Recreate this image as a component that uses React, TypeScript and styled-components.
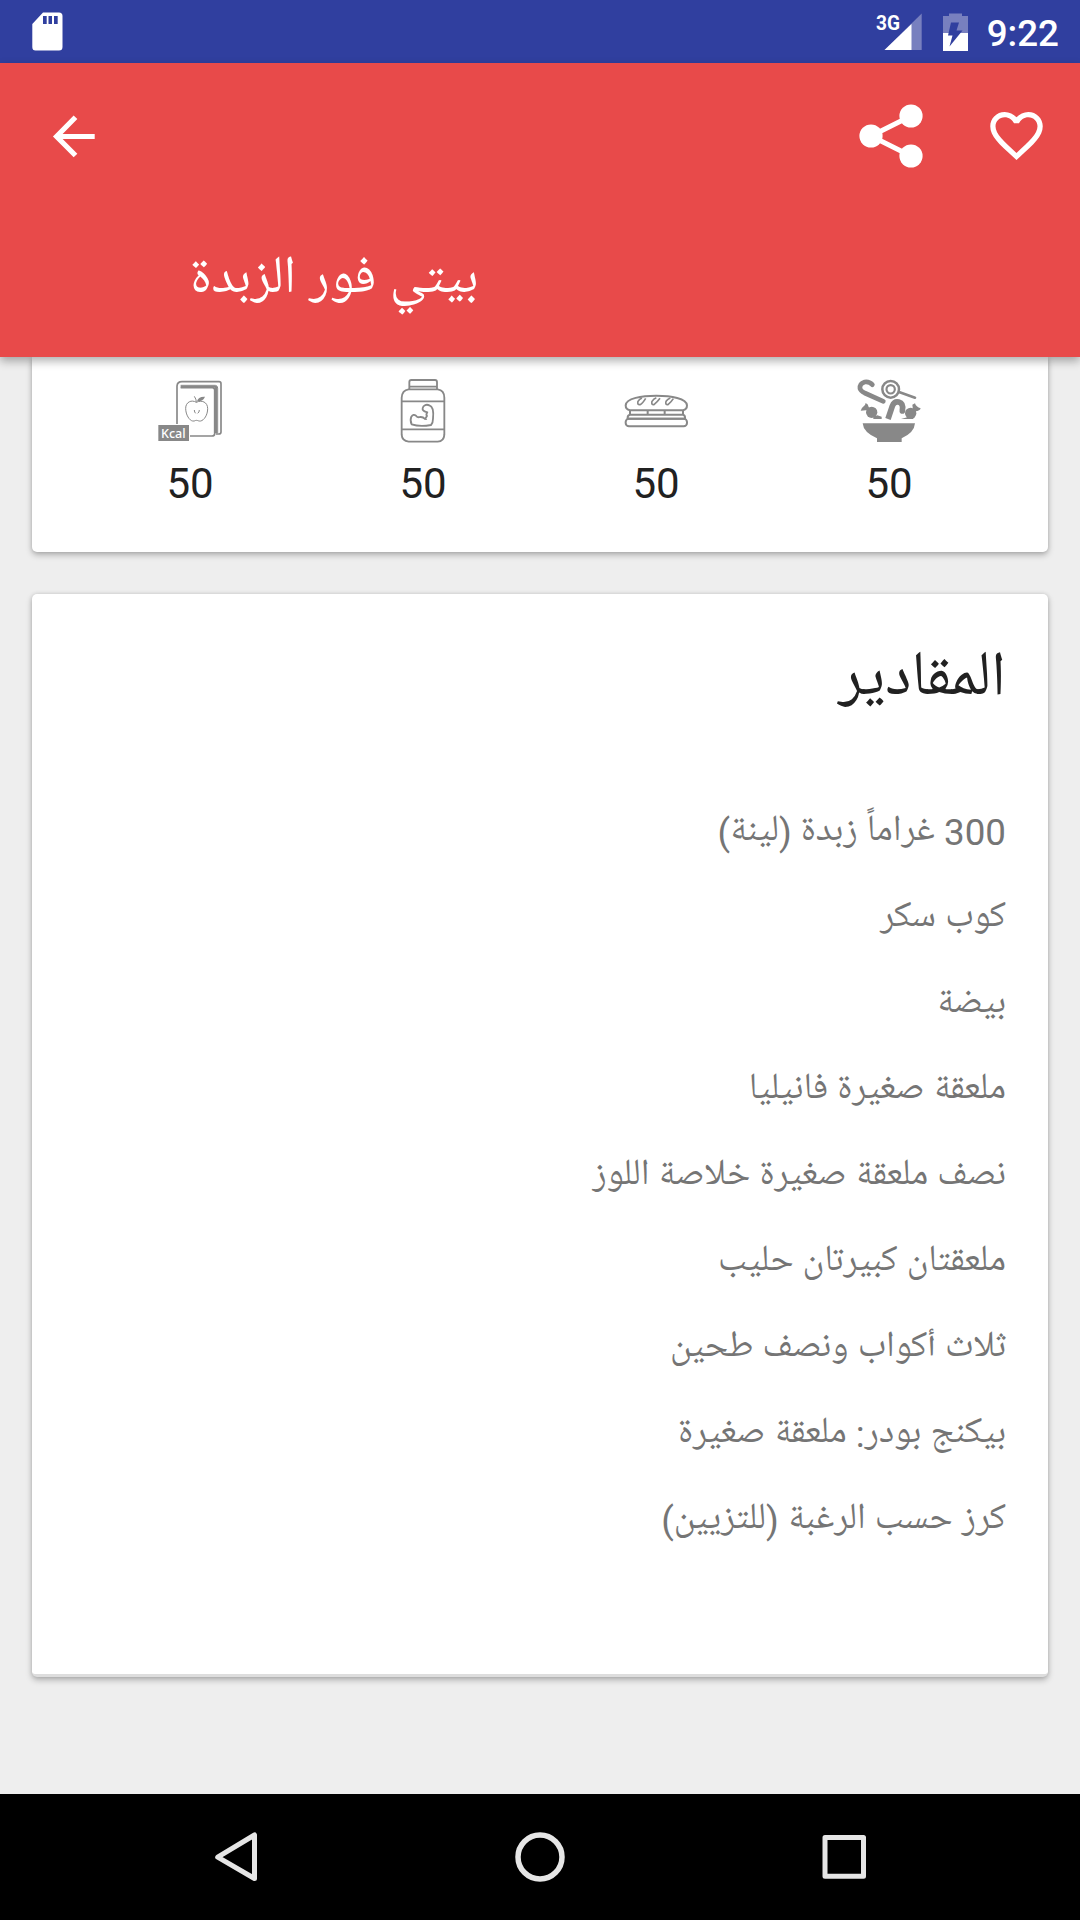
import React from "react";
import styled, { createGlobalStyle } from "styled-components";

const Global = createGlobalStyle`
  body { margin: 0; background: #eee; }
  * { box-sizing: border-box; }
`;
const arabic = `Roboto, "Noto Naskh Arabic UI", "Noto Naskh Arabic", "Noto Sans Arabic", "DejaVu Sans", sans-serif`;

const Screen = styled.div`
  width: 1080px;
  height: 1920px;
  display: flex;
  flex-direction: column;
  background: #eee;
  font-family: ${arabic};
  overflow: hidden;
`;
const StatusBar = styled.div`
  height: 63px;
  flex: none;
  background: #303f9f;
  display: flex;
  align-items: center;
  justify-content: space-between;
  padding: 0 21px 0 32px;
  color: #fff;
`;
const StatusGroup = styled.div`
  display: flex;
  align-items: center;
`;
const Clock = styled.span`
  font: 500 36.75px/63px Roboto, sans-serif;
  margin-left: 18px;
  padding-top: 3px;
`;
const AppBar = styled.header`
  height: 294px;
  flex: none;
  background: #e84a4a;
  color: #fff;
  display: flex;
  flex-direction: column;
  position: relative;
  z-index: 1;
  box-shadow: 0 4px 9px rgba(0, 0, 0, 0.32);
`;
const Toolbar = styled.div`
  height: 147px;
  display: flex;
  align-items: center;
  padding: 0 32px 0 42px;
`;
const Actions = styled.div`
  margin-left: auto;
  display: flex;
  align-items: center;
  gap: 62px;
`;
const Title = styled.h1`
  margin: 0;
  align-self: flex-start;
  padding-left: 190px;
  height: 147px;
  font-size: 52.8px;
  line-height: 143px;
  font-weight: 400;
`;
const Content = styled.main`
  flex: 1;
  padding: 0 32px;
  display: flex;
  flex-direction: column;
  gap: 42px;
`;
const Card = styled.section`
  background: #fff;
  border-radius: 5px;
  box-shadow: 0 3px 6px rgba(0, 0, 0, 0.26), 0 0 4px rgba(0, 0, 0, 0.12);
`;
const Stats = styled(Card)`
  height: 195px;
  border-radius: 0 0 5px 5px;
  display: grid;
  grid-template-columns: repeat(4, 233px);
  padding: 19px 0 0 41.6px;
  align-content: start;
`;
const Stat = styled.div`
  display: flex;
  flex-direction: column;
  align-items: center;
`;
const StatValue = styled.span`
  color: #212121;
  font: 400 42px/49px Roboto, sans-serif;
  margin-top: 11px;
`;
const Ingredients = styled(Card)`
  height: 1083px;
  border-bottom: 3px solid #ddd;
  padding: 46px 42px 0;
`;
const Heading = styled.h2`
  margin: 0 0 66px;
  font-size: 63px;
  line-height: 84px;
  font-weight: 400;
  color: #212121;
`;
const List = styled.ul`
  margin: 0;
  padding: 0;
  list-style: none;
  color: #757575;
  font-size: 36.75px;
`;
const Item = styled.li`
  height: 86px;
  line-height: 86px;
  white-space: nowrap;
`;
const NavBar = styled.nav`
  height: 126px;
  flex: none;
  background: #000;
  display: flex;
  align-items: center;
  justify-content: space-between;
  padding: 0 200px;
`;

const items = [
  "300 غراماً زبدة (لينة)",
  "كوب سكر",
  "بيضة",
  "ملعقة صغيرة فانيليا",
  "نصف ملعقة صغيرة خلاصة اللوز",
  "ملعقتان كبيرتان حليب",
  "ثلاث أكواب ونصف طحين",
  "بيكنج بودر: ملعقة صغيرة",
  "كرز حسب الرغبة (للتزيين)",
];

const KcalTag = styled.text`
  font: 500 38px "Noto Sans", "Open Sans", sans-serif;
  fill: #fff;
`;
const NetworkTag = styled.text`
  font: 700 21px Roboto, sans-serif;
  fill: #fff;
`;

const BookIcon = () => (
  <svg width="72" height="72" viewBox="42 78 216 216" fill="none" stroke="#888" strokeWidth="5" strokeLinejoin="round">
    <path d="M111 222V108Q112 95 126 95H237Q243 95 243 101V246Q243 252 237 252H228" />
    <path d="M122 106H226Q233 107 233 114V250" strokeWidth="3" />
    <path d="M122 113H217Q224 113 224 120V252Q223 258 216 258H150" />
    <path d="M122 110H228V250" strokeWidth="6" />
    <path d="M169 157C155 148 137 156 137 175C137 195 149 212 158 213C165 214 165 211 169 211C174 211 175 214 182 213C192 211 203 195 203 176C203 156 185 149 169 157Z" strokeWidth="3" />
    <path d="M169 157Q169 147 163 139M163 180Q163 187 167 190M178 180Q178 187 173 190" strokeWidth="3" />
    <path d="M171 154Q174 139 195 140Q189 155 171 154Z" fill="#888" stroke="none" />
    <path d="M55 225H147V273H55Z" fill="#888" stroke="none" />
    <KcalTag x="63" y="265" textLength="74" lengthAdjust="spacingAndGlyphs" stroke="none">Kcal</KcalTag>
  </svg>
);
const JarIcon = () => (
  <svg width="72" height="72" viewBox="741 78 216 216" fill="none" stroke="#888" strokeWidth="5.5" strokeLinejoin="round" strokeLinecap="round">
    <path d="M808 117V96Q808 90 814 90H885Q891 90 891 96V117M808 110H891" />
    <path d="M806 118H893Q913 121 913 143V254Q912 274 893 275H806Q786 273 785 254V143Q786 121 806 118ZM785 154H913M785 238H913" />
    <path d="M862 187C853 185 846 181 848 174C850 165 860 162 868 166C879 169 881 187 879 206Q879 219 873 225C856 228 830 228 815 223Q809 211 814 200Q820 191 828 197Q833 204 840 201Q849 200 855 207L861 198Q857 194 862 187Z" />
    <path d="M855 207L860 208" strokeWidth="3" />
  </svg>
);
const SandwichIcon = () => (
  <svg width="72" height="72" viewBox="60 78 216 216" fill="none" stroke="#888" strokeWidth="6" strokeLinejoin="round">
    <path d="M90 181Q77 179 77 166C78 145 125 137 169 137C214 137 260 146 261 166Q261 179 249 181Z" />
    <path d="M90 182V194H249V182M143 182V194M194 182V194M90 194Q82 195 83 206H255Q256 195 249 194" />
    <rect x="77" y="206" width="184" height="23" rx="10" />
    <path d="M114 154Q111 165 120 164Q128 160 137 145M156 154Q153 165 162 164Q171 157 180 145M198 154Q195 165 204 164Q213 157 220 146M114 154Q118 147 126 144M156 154Q161 146 169 143M198 154Q203 147 211 144" strokeWidth="5" />
  </svg>
);
const SweetsIcon = () => (
  <svg width="72" height="72" viewBox="759 78 216 216" fill="none" stroke="#888">
    <path d="M817 104Q808 94 794 96Q778 101 780 116Q782 123 794 129L850 154" strokeWidth="14" strokeLinecap="round" strokeLinejoin="round" />
    <circle cx="872" cy="118" r="25" strokeWidth="7.5" />
    <circle cx="872" cy="118" r="12.5" strokeWidth="6.5" />
    <path d="M897 126L945 143" strokeWidth="8" strokeLinecap="round" />
    <path d="M864 207L877 168Q883 153 896 156Q911 160 907 181" strokeWidth="17" />
    <circle cx="907" cy="183" r="8.5" fill="#888" stroke="none" />
    <g fill="#888" stroke="none">
      <circle cx="815" cy="187" r="17" />
      <path d="M805 180L782 182Q785 173 791 169Q796 166 797 159Q805 162 806 171L810 177ZM820 200L832 196L845 200V207H820Z" />
      <circle cx="932" cy="190" r="17" />
      <path d="M939 180L937 164L945 160Q948 171 962 175Q960 183 946 184ZM903 207L922 202H940V207Z" />
      <path d="M788 220H945Q943 248 905 265V276H831V265Q790 247 788 220Z" />
    </g>
  </svg>
);

const stats = [BookIcon, JarIcon, SandwichIcon, SweetsIcon];

export default function App() {
  return (
    <Screen>
      <Global />
      <StatusBar>
        <svg width="31" height="39" viewBox="0 0 31 39">
          <path fill="#fff" fillRule="evenodd" d="M11 0.5H27Q30.5 0.5 30.5 4V35Q30.5 38.5 27 38.5H3.500Q0.300 38.500 0.300 35V12ZM11 4V12H14.700V4ZM16.500 4V12H20V4ZM22 4V12H25.700V4Z" />
        </svg>
        <StatusGroup>
          <svg width="99" height="52" viewBox="870 5 99 52">
            <path d="M921.700 12.500V49H884.500Z" fill="#7880bf" />
            <path d="M911.500 23V49H884.500Z" fill="#fff" />
            <NetworkTag x="876" y="29" textLength="24" lengthAdjust="spacingAndGlyphs">3G</NetworkTag>
            <path d="M949 12.500H962V15H968V32H943V15H949Z" fill="#7880bf" />
            <path d="M943 32H968V50H943Z" fill="#fff" />
            <path d="M951 21.500H959L956.500 29.500H962.500L949.500 45.500L952.500 34.500H948Z" fill="#303f9f" />
          </svg>
          <Clock>9:22</Clock>
        </StatusGroup>
      </StatusBar>
      <AppBar>
        <Toolbar>
          <svg width="63" height="63" viewBox="42 105 63 63" fill="none" stroke="#fff" strokeWidth="5.2">
            <path d="M94.700 136.500H57M75.500 117.300L56.600 136.500L75.500 155.500" />
          </svg>
          <Actions>
            <svg width="64" height="66" viewBox="859 104 64 66" fill="#fff">
              <path d="M911 116L871 136L911 156" fill="none" stroke="#fff" strokeWidth="5" />
              <circle cx="871" cy="136" r="11.600" />
              <circle cx="911" cy="116" r="11.600" />
              <circle cx="911" cy="156" r="11.600" />
            </svg>
            <svg width="63" height="65" viewBox="0 0 24 24.760" fill="#fff">
              <path d="M16.500 3c-1.740 0-3.410.81-4.500 2.090C10.910 3.810 9.240 3 7.500 3 4.420 3 2 5.420 2 8.500c0 3.780 3.400 6.860 8.550 11.540L12 21.350l1.450-1.320C18.600 15.360 22 12.280 22 8.500 22 5.420 19.580 3 16.500 3zm-4.400 15.550l-.1.100-.1-.100C7.140 14.240 4 11.390 4 8.500 4 6.500 5.500 5 7.500 5c1.540 0 3.040.99 3.570 2.360h1.870C13.460 5.990 14.960 5 16.500 5c2 0 3.500 1.500 3.500 3.500 0 2.890-3.140 5.740-7.900 10.050z" />
            </svg>
          </Actions>
        </Toolbar>
        <Title dir="rtl">بيتي فور الزبدة</Title>
      </AppBar>
      <Content>
        <Stats>
          {stats.map((Icon, i) => (
            <Stat key={i}>
              <Icon />
              <StatValue>50</StatValue>
            </Stat>
          ))}
        </Stats>
        <Ingredients dir="rtl">
          <Heading>المقادير</Heading>
          <List>
            {items.map((t) => (
              <Item key={t}>{t}</Item>
            ))}
          </List>
        </Ingredients>
      </Content>
      <NavBar>
        <svg width="72" height="72" viewBox="200 1821 72 72" fill="none" stroke="#e6e6e6" strokeWidth="5" strokeLinejoin="round">
          <path d="M254.500 1835V1878.500L217.700 1857.200Z" />
        </svg>
        <svg width="72" height="72" viewBox="504 1821 72 72" fill="none" stroke="#e6e6e6" strokeWidth="5.500">
          <circle cx="540" cy="1857" r="22" />
        </svg>
        <svg width="72" height="72" viewBox="808 1821 72 72" fill="none" stroke="#e6e6e6" strokeWidth="5" strokeLinejoin="round">
          <rect x="825" y="1837.500" width="38.500" height="38.800" />
        </svg>
      </NavBar>
    </Screen>
  );
}
